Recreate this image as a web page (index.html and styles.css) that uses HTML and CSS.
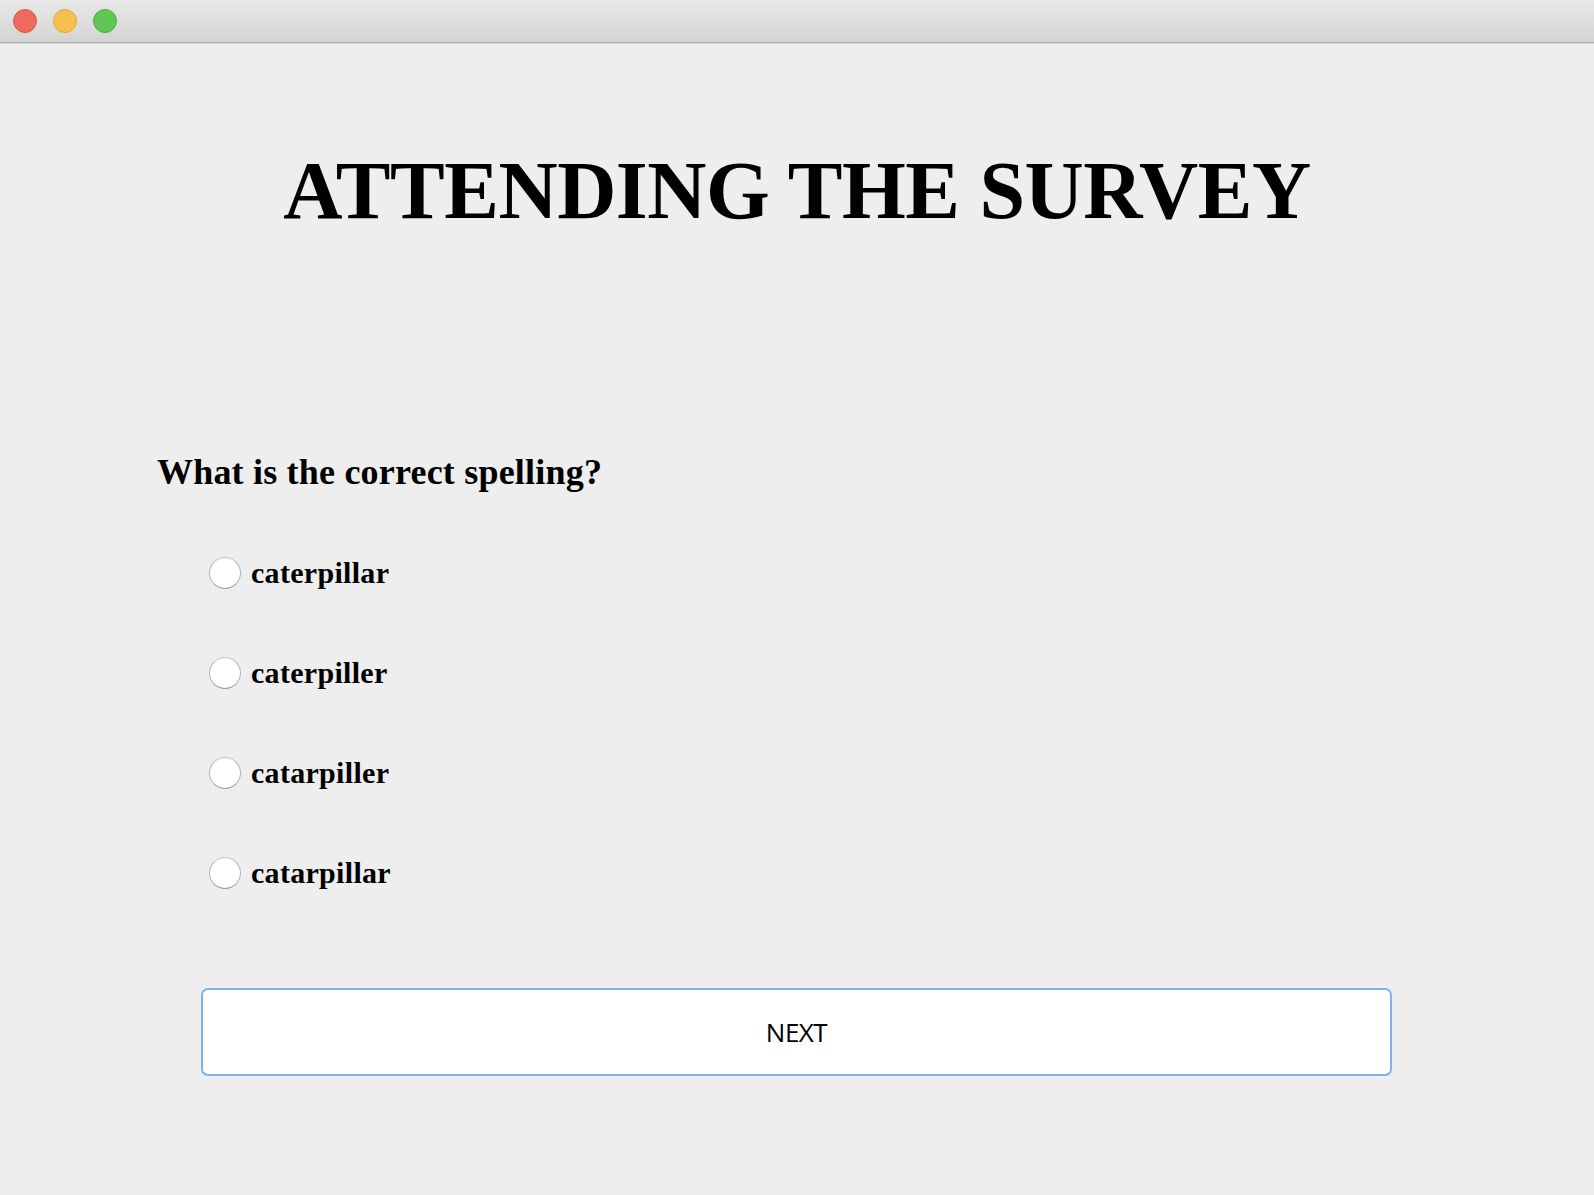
FILE: index.html
```html
<!DOCTYPE html>
<html lang="en">
<head>
<meta charset="utf-8">
<title>Attending the Survey</title>
<link rel="stylesheet" href="styles.css">
</head>
<body>
<div class="window">
  <div class="titlebar">
    <span class="light red"></span>
    <span class="light yellow"></span>
    <span class="light green"></span>
  </div>
  <main class="content">
    <h1 class="title">ATTENDING THE SURVEY</h1>
    <h2 class="question">What is the correct spelling?</h2>
    <div class="options">
      <label class="option"><span class="radio"></span><span class="option-text">caterpillar</span></label>
      <label class="option"><span class="radio"></span><span class="option-text">caterpiller</span></label>
      <label class="option"><span class="radio"></span><span class="option-text">catarpiller</span></label>
      <label class="option"><span class="radio"></span><span class="option-text">catarpillar</span></label>
    </div>
    <div class="actions">
      <button class="next-btn" type="button">NEXT</button>
    </div>
  </main>
</div>
</body>
</html>
```

FILE: styles.css
```css
html, body {
  margin: 0;
  padding: 0;
  background: #eeeeee;
}

.window {
  width: 1594px;
  height: 1195px;
  background: #eeeeee;
  display: flex;
  flex-direction: column;
  overflow: hidden;
}

.titlebar {
  height: 41px;
  flex: none;
  background: linear-gradient(to bottom, #e8e8e8 0%, #d4d4d4 100%);
  border-bottom: 1px solid #aeaeae;
  box-shadow: 0 1px 0 #d8d8d8;
  display: flex;
  align-items: center;
  gap: 16px;
  padding-left: 13px;
  padding-bottom: 1px;
  box-sizing: content-box;
}

.light {
  width: 24px;
  height: 24px;
  border-radius: 50%;
  box-sizing: border-box;
}
.red { background: #ee6a5f; border: 1px solid #d9574d; }
.yellow { background: #f6c04f; border: 1px solid #dfa53a; }
.green { background: #62c655; border: 1px solid #4fab43; }

.content {
  display: flex;
  flex-direction: column;
  font-family: "Liberation Serif", "Times New Roman", serif;
  color: #000;
}

.title {
  margin: 107px 0 0 0;
  font-size: 82px;
  line-height: 82px;
  font-weight: bold;
  letter-spacing: -0.5px;
  text-align: center;
}

.question {
  margin: 222px 0 0 157px;
  font-size: 36px;
  line-height: 36px;
  font-weight: bold;
  letter-spacing: 0.2px;
}

.options {
  margin: 63px 0 0 209px;
  display: flex;
  flex-direction: column;
  gap: 60px;
}

.option {
  height: 40px;
  display: flex;
  align-items: center;
  gap: 10px;
}

.radio {
  width: 32px;
  height: 32px;
  border-radius: 50%;
  box-sizing: border-box;
  background: #ffffff;
  border: 1px solid #b4b4b4;
  border-top-color: #c6c6c6;
  border-bottom-color: #9e9e9e;
  box-shadow: inset 0 1px 1px rgba(0,0,0,0.04);
}

.option-text {
  font-size: 30px;
  line-height: 40px;
  font-weight: bold;
  letter-spacing: 0.3px;
}

.actions {
  margin: 95px 0 0 201px;
}

.next-btn {
  width: 1191px;
  height: 88px;
  box-sizing: border-box;
  background: #ffffff;
  border: 2px solid #7fb1ea;
  border-radius: 7px;
  font-family: "Open Sans", "DejaVu Sans", sans-serif;
  font-size: 26px;
  color: #000;
  padding: 0;
  margin: 0;
  cursor: pointer;
  letter-spacing: -0.5px;
}
```
